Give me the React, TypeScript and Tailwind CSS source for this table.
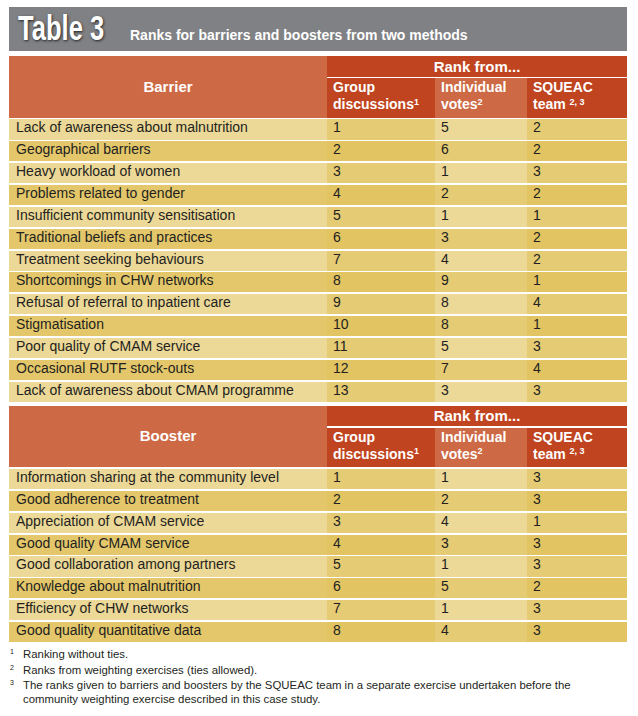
import React from "react";

type Row = [string, string, string, string];

const barriers: Row[] = [
  ["Lack of awareness about malnutrition", "1", "5", "2"],
  ["Geographical barriers", "2", "6", "2"],
  ["Heavy workload of women", "3", "1", "3"],
  ["Problems related to gender", "4", "2", "2"],
  ["Insufficient community sensitisation", "5", "1", "1"],
  ["Traditional beliefs and practices", "6", "3", "2"],
  ["Treatment seeking behaviours", "7", "4", "2"],
  ["Shortcomings in CHW networks", "8", "9", "1"],
  ["Refusal of referral to inpatient care", "9", "8", "4"],
  ["Stigmatisation", "10", "8", "1"],
  ["Poor quality of CMAM service", "11", "5", "3"],
  ["Occasional RUTF stock-outs", "12", "7", "4"],
  ["Lack of awareness about CMAM programme", "13", "3", "3"],
];

const boosters: Row[] = [
  ["Information sharing at the community level", "1", "1", "3"],
  ["Good adherence to treatment", "2", "2", "3"],
  ["Appreciation of CMAM service", "3", "4", "1"],
  ["Good quality CMAM service", "4", "3", "3"],
  ["Good collaboration among partners", "5", "1", "3"],
  ["Knowledge about malnutrition", "6", "5", "2"],
  ["Efficiency of CHW networks", "7", "1", "3"],
  ["Good quality quantitative data", "8", "4", "3"],
];

function Header({ title }: { title: string }) {
  return (
    <div className="flex h-[61.7px] text-white font-bold">
      <div className="w-[318px] bg-[#cd6944] flex items-center justify-center text-[15px]">
        {title}
      </div>
      <div className="w-[300px] flex flex-col gap-[1.7px]">
        <div className="h-[20.5px] bg-[#c0441f] flex items-center justify-center text-[15px] leading-none">
          Rank from...
        </div>
        <div className="flex flex-1 text-[14px] leading-[17px]">
          <div className="w-[108px] bg-[#c0441f] px-[6px] pt-[1px]">
            Group
            <br />
            discussions<sup className="text-[9px]">1</sup>
          </div>
          <div className="w-[92px] bg-[#cd6944] px-[6px] pt-[1px]">
            Individual
            <br />
            votes<sup className="text-[9px]">2</sup>
          </div>
          <div className="w-[100px] bg-[#c0441f] px-[6px] pt-[1px]">
            SQUEAC
            <br />
            team <sup className="text-[9px]">2, 3</sup>
          </div>
        </div>
      </div>
    </div>
  );
}

function DataRow({ row, odd }: { row: Row; odd: boolean }) {
  const label = odd ? "bg-[#ecd897]" : "bg-[#e3c76a]";
  const side = odd ? "bg-[#e5cb74]" : "bg-[#e2c462]";
  const mid = odd ? "bg-[#ecd897]" : "bg-[#e5cb74]";
  return (
    <div className="flex h-[20.1px] text-[14px] leading-[16px]">
      <div className={`w-[318px] pl-[7px] whitespace-nowrap ${label}`}>{row[0]}</div>
      <div className={`w-[108px] pl-[6px] ${side}`}>{row[1]}</div>
      <div className={`w-[92px] pl-[6px] ${mid}`}>{row[2]}</div>
      <div className={`w-[100px] pl-[6px] ${side}`}>{row[3]}</div>
    </div>
  );
}

function Section({ title, rows }: { title: string; rows: Row[] }) {
  return (
    <div className="flex flex-col gap-[1.75px]">
      <Header title={title} />
      {rows.map((r, i) => (
        <DataRow key={i} row={r} odd={i % 2 === 0} />
      ))}
    </div>
  );
}

function Note({ n, children }: { n: string; children: React.ReactNode }) {
  return (
    <div className="flex">
      <span className="w-[13px] text-[7px] leading-[10px] shrink-0">{n}</span>
      <span className="whitespace-nowrap">{children}</span>
    </div>
  );
}

export default function App() {
  return (
    <div className="w-[638px] h-[716px] bg-white pt-[7px] pl-[9px] font-['Liberation_Sans',Arial,sans-serif] text-[#231f20]">
      <div className="w-[618px]">
        <div className="h-[44px] bg-[#808184] flex items-baseline pl-[9px] pt-[3px] text-white font-bold whitespace-nowrap">
          <div className="w-[112px] shrink-0 text-[35px] leading-[35px]">
            <span className="inline-block origin-left scale-x-[0.73] [text-shadow:1px_1px_3px_rgba(0,0,0,0.75)]">
              Table 3
            </span>
          </div>
          <span className="text-[14px]">Ranks for barriers and boosters from two methods</span>
        </div>
        <div className="mt-[5px]">
          <Section title="Barrier" rows={barriers} />
        </div>
        <div className="mt-[4px]">
          <Section title="Booster" rows={boosters} />
        </div>
        <div className="mt-[5px] pl-[1px] text-[11.4px] leading-[14px] flex flex-col gap-[1.5px]">
          <Note n="1">Ranking without ties.</Note>
          <Note n="2">Ranks from weighting exercises (ties allowed).</Note>
          <Note n="3">
            The ranks given to barriers and boosters by the SQUEAC team in a separate exercise undertaken before the
            <br />
            community weighting exercise described in this case study.
          </Note>
        </div>
      </div>
    </div>
  );
}
